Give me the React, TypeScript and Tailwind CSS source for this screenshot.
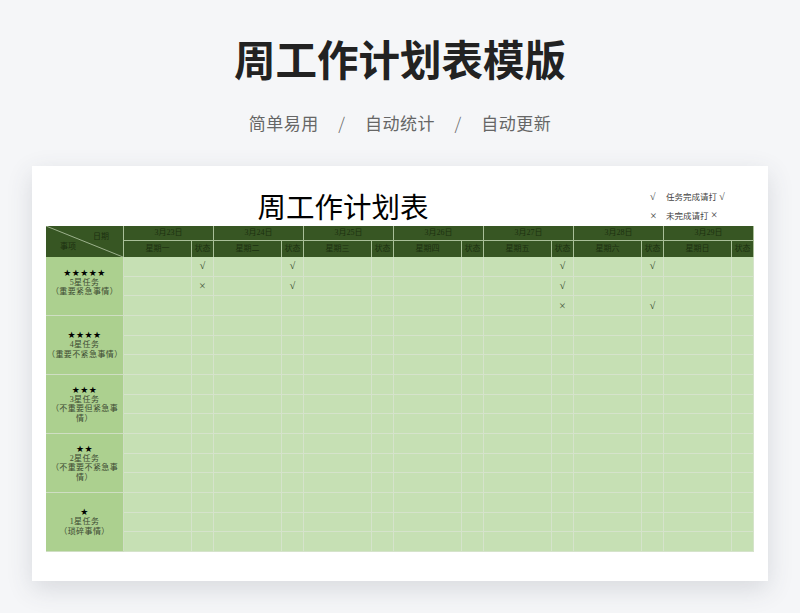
const days = [
  ["3月23日", "星期一"],
  ["3月24日", "星期二"],
  ["3月25日", "星期三"],
  ["3月26日", "星期四"],
  ["3月27日", "星期五"],
  ["3月28日", "星期六"],
  ["3月29日", "星期日"],
];

const groups = [
  { stars: "★★★★★", name: "5星任务", note: "（重要紧急事情）" },
  { stars: "★★★★", name: "4星任务", note: "（重要不紧急事情）" },
  { stars: "★★★", name: "3星任务", note: "（不重要但紧急事情）" },
  { stars: "★★", name: "2星任务", note: "（不重要不紧急事情）" },
  { stars: "★", name: "1星任务", note: "（琐碎事情）" },
];

// row index -> day index -> mark
const marks: Record<string, string> = {
  "0-0": "√",
  "0-1": "√",
  "0-4": "√",
  "0-5": "√",
  "1-0": "×",
  "1-1": "√",
  "1-4": "√",
  "2-4": "×",
  "2-5": "√",
};

const serif = "font-['Liberation_Serif','Noto_Sans_CJK_SC',serif]";

function Mark({ value }: { value?: string }) {
  if (!value) return null;
  if (value === "×") return <span className="text-[12px] leading-none text-[#4a5a40]">×</span>;
  return <span className="text-[10px] leading-none text-[#2f3f25]">√</span>;
}

export default function App() {
  return (
    <div className="w-[800px] h-[613px] overflow-hidden bg-[#f5f6f8] flex flex-col items-center font-['Noto_Sans_CJK_SC',sans-serif]">
      <h1 className="mt-[36px] text-[41.5px] leading-[44px] font-bold text-[#222222]">周工作计划表模版</h1>
      <div className="mt-[31px] h-[24px] flex items-center text-[17px] leading-[24px] tracking-[0.5px] text-[#666666]">
        <span>简单易用</span>
        <span className="mx-[19.5px] font-light">/</span>
        <span>自动统计</span>
        <span className="mx-[19.5px] font-light">/</span>
        <span>自动更新</span>
      </div>

      <div className="mt-[31px] w-[736px] h-[415px] bg-white px-[14px] shadow-[0_8px_24px_rgba(60,70,90,0.16)]">
        <div className="h-[60px] flex">
          <div className="w-[594px] flex items-end justify-center">
            <span className={`${serif} text-[28.5px] leading-[28px] mb-[3px] text-black`}>周工作计划表</span>
          </div>
          <div className={`${serif} pt-[22px] pl-[10px] text-[8.5px] leading-[18px] text-[#444444]`}>
            <div className="flex items-center">
              <span className="w-[16px] text-[10px]">√</span>
              <span>任务完成请打 <span className="text-[10px]">√</span></span>
            </div>
            <div className="flex items-center">
              <span className="w-[16px] text-[12px]">×</span>
              <span>未完成请打 <span className="text-[12px]">×</span></span>
            </div>
          </div>
        </div>

        <div
          className={`${serif} w-[708px] grid grid-cols-[78px_repeat(7,68px_22px)] grid-rows-[15px_16px_repeat(15,19.67px)] text-[8px] bg-[#c6e0b4]`}
        >
          <div className="row-span-2 relative bg-[#375623] border-r border-r-[#a9bf98] flex flex-col text-[#1c3010] px-[14px]">
            <svg className="absolute inset-0 w-full h-full" viewBox="0 0 78 31" preserveAspectRatio="none">
              <line x1="0" y1="0" x2="78" y2="31" stroke="#b7c9a8" strokeWidth="0.8" />
            </svg>
            <span className="mt-[6px] self-end leading-[10px]">日期</span>
            <span className="self-start leading-[10px]">事项</span>
          </div>
          {days.map(([date]) => (
            <div
              key={date}
              className="col-span-2 bg-[#375623] border-r border-b border-[#a9bf98] flex items-center justify-center text-[#1c3010]"
            >
              {date}
            </div>
          ))}
          {days.map(([date, week]) => (
            <div key={date} className="contents">
              <div className="bg-[#375623] border-r border-r-[#a9bf98] flex items-center justify-center text-[#1c3010]">
                {week}
              </div>
              <div className="bg-[#375623] border-r border-r-[#a9bf98] flex items-center justify-center text-[#1c3010]">
                状态
              </div>
            </div>
          ))}
          {groups.map((g, gi) =>
            [0, 1, 2].map((r) => (
              <div key={`${gi}-${r}`} className="contents">
                {r === 0 && (
                  <div
                    className={`row-span-3 bg-[#acd08f] border-b border-r border-[#cfdec3] flex flex-col items-center justify-center px-[1px] text-center leading-[9.5px] tracking-[0.4px] text-[#3c4a32] ${gi === 0 ? "pb-[7px]" : ""}`}
                  >
                    <span className="font-['DejaVu_Sans',sans-serif] text-[9px] leading-[10px] text-black">{g.stars}</span>
                    <span>{g.name}</span>
                    <span>{g.note}</span>
                  </div>
                )}
                {days.map((_, d) => (
                  <div key={d} className="contents">
                    <div className="border-r border-b border-[#d5e3cb]" />
                    <div className="border-r border-b border-[#d5e3cb] flex items-center justify-center">
                      {gi === 0 && <Mark value={marks[`${r}-${d}`]} />}
                    </div>
                  </div>
                ))}
              </div>
            ))
          )}
        </div>
      </div>
    </div>
  );
}
